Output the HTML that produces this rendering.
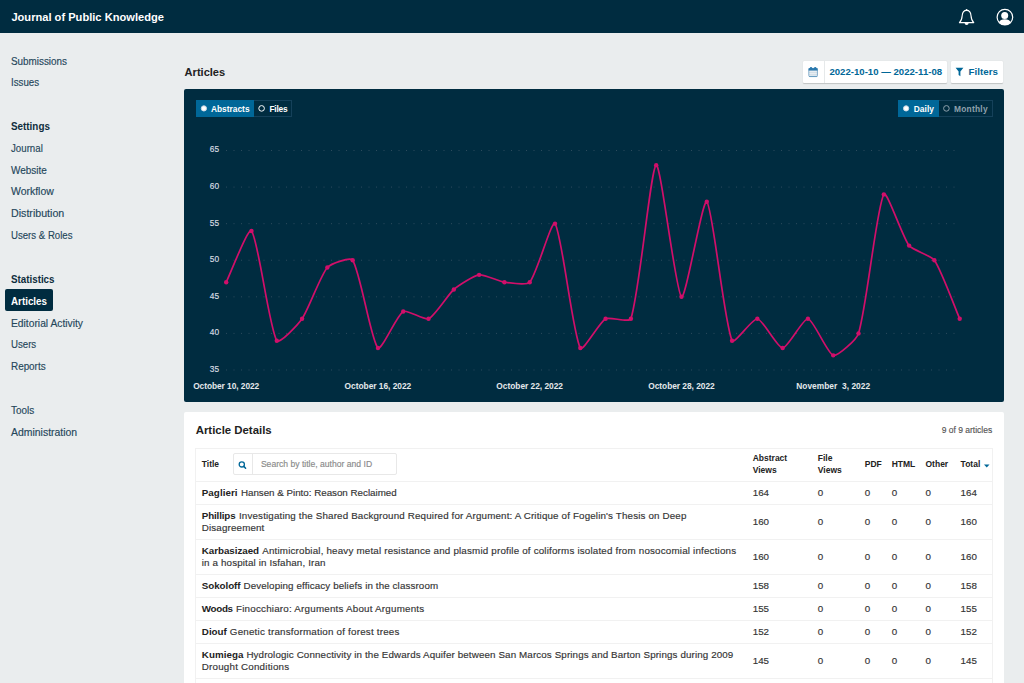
<!DOCTYPE html>
<html><head><meta charset="utf-8"><style>
html,body{margin:0;padding:0;}
body{width:1024px;height:683px;overflow:hidden;position:relative;background:#eaedee;font-family:"Liberation Sans",sans-serif;color:#222;}
.t{position:absolute;white-space:nowrap;line-height:1;-webkit-text-stroke:0.15px currentColor;}
.t[style*="font-weight:700"]{-webkit-text-stroke:0;}
.b{position:absolute;}
</style></head><body>
<div class="b" style="left:0px;top:0px;width:1024px;height:33px;background:#002c40;"></div>
<div class="t" style="left:11.40px;top:12.00px;font-size:11.1px;font-weight:700;color:#fff;letter-spacing:0.010px;">Journal of Public Knowledge</div>
<svg class="b" style="left:956px;top:7px" width="22" height="21" viewBox="0 0 22 21">
<path d="M10.6 3.4 C7.4 3.4 6.4 5.8 6.2 8.6 C6 12 5.2 14 3.4 15.6 L17.8 15.6 C16 14 15.2 12 15 8.6 C14.8 5.8 13.8 3.4 10.6 3.4 Z" fill="none" stroke="#fff" stroke-width="1.1" stroke-linejoin="round"/>
<path d="M8.6 16 A2 2 0 0 0 12.6 16 Z" fill="#fff"/>
<circle cx="10.6" cy="2.9" r="0.9" fill="#fff"/>
</svg>
<svg class="b" style="left:995px;top:7px" width="20" height="20" viewBox="0 0 20 20">
<circle cx="9.9" cy="10.2" r="7.8" fill="none" stroke="#fff" stroke-width="1.2"/>
<circle cx="9.7" cy="8.4" r="3.5" fill="#fff"/>
<path d="M4 15.4 C4.8 13.3 6.8 12.3 9.8 12.3 C12.8 12.3 14.8 13.3 15.7 15.4 C14.3 17.1 12.2 18 9.8 18 C7.4 18 5.4 17.1 4 15.4 Z" fill="#fff"/>
</svg>
<div class="t" style="left:11.00px;top:55.56px;font-size:10.8px;color:#24465a;transform:scaleX(0.9146);transform-origin:0 0;">Submissions</div>
<div class="t" style="left:11.00px;top:77.46px;font-size:10.8px;color:#24465a;transform:scaleX(0.9002);transform-origin:0 0;">Issues</div>
<div class="t" style="left:11.00px;top:121.16px;font-size:10.8px;font-weight:700;color:#0f2d3d;transform:scaleX(0.9130);transform-origin:0 0;">Settings</div>
<div class="t" style="left:11.00px;top:142.86px;font-size:10.8px;color:#24465a;transform:scaleX(0.8977);transform-origin:0 0;">Journal</div>
<div class="t" style="left:11.00px;top:164.66px;font-size:10.8px;color:#24465a;transform:scaleX(0.9248);transform-origin:0 0;">Website</div>
<div class="t" style="left:11.00px;top:186.46px;font-size:10.8px;color:#24465a;transform:scaleX(0.9681);transform-origin:0 0;">Workflow</div>
<div class="t" style="left:11.00px;top:208.26px;font-size:10.8px;color:#24465a;transform:scaleX(0.9866);transform-origin:0 0;">Distribution</div>
<div class="t" style="left:11.00px;top:230.16px;font-size:10.8px;color:#24465a;transform:scaleX(0.8910);transform-origin:0 0;">Users &amp; Roles</div>
<div class="t" style="left:11.00px;top:273.86px;font-size:10.8px;font-weight:700;color:#0f2d3d;transform:scaleX(0.9058);transform-origin:0 0;">Statistics</div>
<div class="b" style="left:5.2px;top:289.4px;width:47.599999999999994px;height:21.80000000000001px;background:#002c40;border-radius:2px;"></div>
<div class="t" style="left:11.00px;top:295.76px;font-size:10.8px;font-weight:700;color:#fff;transform:scaleX(0.9086);transform-origin:0 0;">Articles</div>
<div class="t" style="left:11.00px;top:317.66px;font-size:10.8px;color:#24465a;transform:scaleX(0.9520);transform-origin:0 0;">Editorial Activity</div>
<div class="t" style="left:11.00px;top:339.46px;font-size:10.8px;color:#24465a;transform:scaleX(0.8935);transform-origin:0 0;">Users</div>
<div class="t" style="left:11.00px;top:361.36px;font-size:10.8px;color:#24465a;transform:scaleX(0.9149);transform-origin:0 0;">Reports</div>
<div class="t" style="left:11.00px;top:405.06px;font-size:10.8px;color:#24465a;transform:scaleX(0.9202);transform-origin:0 0;">Tools</div>
<div class="t" style="left:11.00px;top:426.86px;font-size:10.8px;color:#24465a;transform:scaleX(0.9674);transform-origin:0 0;">Administration</div>
<div class="t" style="left:184.60px;top:66.93px;font-size:11.07px;font-weight:700;letter-spacing:-0.001px;">Articles</div>
<div class="b" style="left:802.8px;top:61px;width:143.9000000000001px;height:21.700000000000003px;background:#fff;border-radius:1px;box-shadow:0 0.5px 1px rgba(0,0,0,.18);"></div>
<div class="b" style="left:824px;top:61px;width:1px;height:21.700000000000003px;background:#e6e9ea;"></div>
<svg class="b" style="left:807px;top:66px" width="12" height="12" viewBox="0 0 12 12">
<rect x="1.8" y="2.4" width="8.6" height="8.2" rx="1" fill="#d3dee6" stroke="#6a9cc0" stroke-width="0.8"/>
<rect x="1.6" y="2.2" width="9" height="2.3" fill="#2a78ad"/>
<circle cx="4" cy="2.3" r="1.2" fill="#2a78ad"/><circle cx="8.2" cy="2.3" r="1.2" fill="#2a78ad"/>
<path d="M2.4 5.6H9.8M2.4 7.6H9.8M2.4 9.4H9.8" stroke="#f4f7f9" stroke-width=".7"/>
<path d="M2 10.4H10.2" stroke="#4a8bb8" stroke-width=".6"/>
</svg>
<div class="t" style="left:829.40px;top:66.77px;font-size:9.6px;font-weight:700;color:#006798;letter-spacing:0.008px;">2022-10-10 — 2022-11-08</div>
<div class="b" style="left:951px;top:61px;width:51.799999999999955px;height:21.700000000000003px;background:#fff;border-radius:1px;box-shadow:0 0.5px 1px rgba(0,0,0,.18);"></div>
<svg class="b" style="left:955px;top:67px" width="9" height="10" viewBox="0 0 9 10">
<path d="M0.6 0.8 H8.4 L5.4 4.4 V9.2 L3.6 8 V4.4 Z" fill="#006798"/>
</svg>
<div class="t" style="left:968.60px;top:66.74px;font-size:9.76px;font-weight:700;color:#006798;letter-spacing:0.001px;">Filters</div>
<div class="b" style="left:184px;top:89px;width:819.5px;height:312.5px;background:#002c40;border-radius:2px;"></div>
<div class="b" style="left:196px;top:99.7px;width:96px;height:17.5px;border:1px solid #15415a;box-sizing:border-box;"></div>
<div class="b" style="left:196px;top:99.7px;width:58.400000000000006px;height:17.5px;background:#006798;"></div>
<svg class="b" style="left:199px;top:103px" width="10" height="10"><circle cx="4.9" cy="5.4" r="2.6" fill="#fff" stroke="#c8d8e4" stroke-width="1"/></svg>
<div class="t" style="left:210.90px;top:104.79px;font-size:8.4px;font-weight:700;color:#fff;letter-spacing:0.006px;">Abstracts</div>
<svg class="b" style="left:256px;top:103px" width="10" height="10"><circle cx="5.6" cy="5.4" r="2.8" fill="none" stroke="#fff" stroke-width="1"/></svg>
<div class="t" style="left:269.40px;top:104.79px;font-size:8.4px;font-weight:700;color:#fff;letter-spacing:-0.228px;">Files</div>
<div class="b" style="left:898.4px;top:99.8px;width:94.20000000000005px;height:17.200000000000003px;border:1px solid #15415a;box-sizing:border-box;"></div>
<div class="b" style="left:898.4px;top:99.8px;width:40.700000000000045px;height:17.200000000000003px;background:#006798;"></div>
<svg class="b" style="left:901px;top:103px" width="10" height="10"><circle cx="5.1" cy="5.4" r="2.6" fill="#fff" stroke="#c8d8e4" stroke-width="1"/></svg>
<div class="t" style="left:913.80px;top:104.79px;font-size:8.4px;font-weight:700;color:#fff;letter-spacing:0.025px;">Daily</div>
<svg class="b" style="left:941px;top:103px" width="10" height="10"><circle cx="5.4" cy="5.4" r="2.8" fill="none" stroke="#8fa1ac" stroke-width="1"/></svg>
<div class="t" style="left:953.90px;top:104.79px;font-size:8.4px;font-weight:700;color:#8fa1ac;letter-spacing:0.272px;">Monthly</div>
<svg class="b" style="left:0;top:0" width="1024" height="683">
<line x1="226" y1="150.50" x2="956" y2="150.50" stroke="#2c4b5d" stroke-width="1" stroke-dasharray="1 6.5"/>
<line x1="226" y1="187.08" x2="956" y2="187.08" stroke="#2c4b5d" stroke-width="1" stroke-dasharray="1 6.5"/>
<line x1="226" y1="223.66" x2="956" y2="223.66" stroke="#2c4b5d" stroke-width="1" stroke-dasharray="1 6.5"/>
<line x1="226" y1="260.24" x2="956" y2="260.24" stroke="#2c4b5d" stroke-width="1" stroke-dasharray="1 6.5"/>
<line x1="226" y1="296.82" x2="956" y2="296.82" stroke="#2c4b5d" stroke-width="1" stroke-dasharray="1 6.5"/>
<line x1="226" y1="333.40" x2="956" y2="333.40" stroke="#2c4b5d" stroke-width="1" stroke-dasharray="1 6.5"/>
<line x1="226" y1="369.98" x2="956" y2="369.98" stroke="#2c4b5d" stroke-width="1" stroke-dasharray="1 6.5"/>
<path d="M226.20 282.19 C231.26 271.95 248.09 227.04 251.49 230.98 C258.21 238.74 268.99 327.18 276.79 340.72 C279.11 344.74 298.34 324.18 302.08 318.77 C308.46 309.54 320.45 275.57 327.37 267.56 C330.56 263.86 350.40 256.64 352.67 260.24 C360.52 272.73 371.15 341.14 377.96 348.03 C381.27 351.39 396.90 315.13 403.25 311.45 C407.01 309.28 424.45 320.55 428.54 318.77 C434.56 316.16 448.07 294.51 453.84 289.50 C458.19 285.73 473.81 275.64 479.13 274.87 C483.93 274.18 499.26 281.44 504.42 282.19 C509.38 282.90 526.84 285.51 529.72 282.19 C536.96 273.81 551.63 219.26 555.01 223.66 C561.74 232.43 572.55 333.45 580.30 348.03 C582.67 352.48 599.48 322.31 605.60 318.77 C609.60 316.45 629.48 323.06 630.89 318.77 C639.59 292.33 650.75 167.49 656.18 165.13 C660.86 163.10 675.64 292.60 681.48 296.82 C685.76 299.92 702.62 198.11 706.77 201.71 C712.73 206.89 723.88 321.79 732.06 340.72 C734.00 345.20 752.66 318.09 757.36 318.77 C762.78 319.55 777.59 348.03 782.65 348.03 C787.71 348.03 803.24 318.09 807.94 318.77 C813.35 319.55 827.46 353.68 833.23 355.35 C837.58 356.61 856.59 339.57 858.53 333.40 C866.71 307.38 876.62 206.90 883.82 194.40 C886.73 189.34 902.42 236.90 909.11 245.61 C912.54 250.06 931.23 255.64 934.41 260.24 C941.34 270.27 954.64 307.06 959.70 318.77" fill="none" stroke="#d10f6a" stroke-width="1.7"/>
<circle cx="226.20" cy="282.19" r="2.2" fill="#d10f6a"/>
<circle cx="251.49" cy="230.98" r="2.2" fill="#d10f6a"/>
<circle cx="276.79" cy="340.72" r="2.2" fill="#d10f6a"/>
<circle cx="302.08" cy="318.77" r="2.2" fill="#d10f6a"/>
<circle cx="327.37" cy="267.56" r="2.2" fill="#d10f6a"/>
<circle cx="352.67" cy="260.24" r="2.2" fill="#d10f6a"/>
<circle cx="377.96" cy="348.03" r="2.2" fill="#d10f6a"/>
<circle cx="403.25" cy="311.45" r="2.2" fill="#d10f6a"/>
<circle cx="428.54" cy="318.77" r="2.2" fill="#d10f6a"/>
<circle cx="453.84" cy="289.50" r="2.2" fill="#d10f6a"/>
<circle cx="479.13" cy="274.87" r="2.2" fill="#d10f6a"/>
<circle cx="504.42" cy="282.19" r="2.2" fill="#d10f6a"/>
<circle cx="529.72" cy="282.19" r="2.2" fill="#d10f6a"/>
<circle cx="555.01" cy="223.66" r="2.2" fill="#d10f6a"/>
<circle cx="580.30" cy="348.03" r="2.2" fill="#d10f6a"/>
<circle cx="605.60" cy="318.77" r="2.2" fill="#d10f6a"/>
<circle cx="630.89" cy="318.77" r="2.2" fill="#d10f6a"/>
<circle cx="656.18" cy="165.13" r="2.2" fill="#d10f6a"/>
<circle cx="681.48" cy="296.82" r="2.2" fill="#d10f6a"/>
<circle cx="706.77" cy="201.71" r="2.2" fill="#d10f6a"/>
<circle cx="732.06" cy="340.72" r="2.2" fill="#d10f6a"/>
<circle cx="757.36" cy="318.77" r="2.2" fill="#d10f6a"/>
<circle cx="782.65" cy="348.03" r="2.2" fill="#d10f6a"/>
<circle cx="807.94" cy="318.77" r="2.2" fill="#d10f6a"/>
<circle cx="833.23" cy="355.35" r="2.2" fill="#d10f6a"/>
<circle cx="858.53" cy="333.40" r="2.2" fill="#d10f6a"/>
<circle cx="883.82" cy="194.40" r="2.2" fill="#d10f6a"/>
<circle cx="909.11" cy="245.61" r="2.2" fill="#d10f6a"/>
<circle cx="934.41" cy="260.24" r="2.2" fill="#d10f6a"/>
<circle cx="959.70" cy="318.77" r="2.2" fill="#d10f6a"/>
</svg>
<div class="t" style="left:209.87px;top:145.47px;font-size:8.3px;color:#d9dee2;">65</div>
<div class="t" style="left:209.87px;top:182.05px;font-size:8.3px;color:#d9dee2;">60</div>
<div class="t" style="left:209.87px;top:218.63px;font-size:8.3px;color:#d9dee2;">55</div>
<div class="t" style="left:209.87px;top:255.21px;font-size:8.3px;color:#d9dee2;">50</div>
<div class="t" style="left:209.87px;top:291.79px;font-size:8.3px;color:#d9dee2;">45</div>
<div class="t" style="left:209.87px;top:328.37px;font-size:8.3px;color:#d9dee2;">40</div>
<div class="t" style="left:209.87px;top:364.95px;font-size:8.3px;color:#d9dee2;">35</div>
<div class="t" style="left:193.15px;top:382.23px;font-size:8.35px;font-weight:700;color:#e4e8eb;letter-spacing:-0.046px;white-space:pre;">October 10, 2022</div>
<div class="t" style="left:344.61px;top:382.23px;font-size:8.35px;font-weight:700;color:#e4e8eb;letter-spacing:-0.009px;white-space:pre;">October 16, 2022</div>
<div class="t" style="left:496.37px;top:382.23px;font-size:8.35px;font-weight:700;color:#e4e8eb;letter-spacing:-0.009px;white-space:pre;">October 22, 2022</div>
<div class="t" style="left:648.28px;top:382.23px;font-size:8.35px;font-weight:700;color:#e4e8eb;letter-spacing:-0.027px;white-space:pre;">October 28, 2022</div>
<div class="t" style="left:796.23px;top:382.23px;font-size:8.35px;font-weight:700;color:#e4e8eb;letter-spacing:0.039px;white-space:pre;">November  3, 2022</div>
<div class="b" style="left:184px;top:412px;width:819.5px;height:288px;background:#fff;border-radius:2px;"></div>
<div class="t" style="left:195.70px;top:424.85px;font-size:11.4px;font-weight:700;letter-spacing:-0.002px;">Article Details</div>
<div class="t" style="left:941.70px;top:426.10px;font-size:8.5px;color:#555;letter-spacing:-0.003px;">9 of 9 articles</div>
<div class="b" style="left:195px;top:447.5px;width:798px;height:252.5px;border:1px solid #f1f1f1;border-bottom:none;box-sizing:border-box;"></div>
<div class="t" style="left:201.80px;top:460.05px;font-size:8.45px;font-weight:700;letter-spacing:-0.004px;">Title</div>
<div class="b" style="left:233px;top:453.3px;width:164px;height:22.099999999999966px;border:1px solid #e8e8e8;border-radius:2px;box-sizing:border-box;"></div>
<div class="b" style="left:252.2px;top:453.3px;width:1.0px;height:22.099999999999966px;background:#e8e8e8;"></div>
<svg class="b" style="left:237px;top:459px" width="11" height="11" viewBox="0 0 11 11">
<circle cx="4.8" cy="5.4" r="2.6" fill="none" stroke="#006798" stroke-width="1.3"/>
<path d="M6.8 7.4 L8.6 9.2" stroke="#006798" stroke-width="1.5" stroke-linecap="round"/>
</svg>
<div class="t" style="left:260.90px;top:460.32px;font-size:8.6px;color:#8a8a8a;letter-spacing:-0.003px;">Search by title, author and ID</div>
<div class="t" style="left:752.70px;top:454.40px;font-size:8.5px;font-weight:700;">Abstract</div>
<div class="t" style="left:752.70px;top:465.80px;font-size:8.5px;font-weight:700;">Views</div>
<div class="t" style="left:817.80px;top:454.40px;font-size:8.5px;font-weight:700;">File</div>
<div class="t" style="left:817.80px;top:465.80px;font-size:8.5px;font-weight:700;">Views</div>
<div class="t" style="left:864.80px;top:460.00px;font-size:8.5px;font-weight:700;">PDF</div>
<div class="t" style="left:891.70px;top:460.00px;font-size:8.5px;font-weight:700;">HTML</div>
<div class="t" style="left:925.50px;top:460.00px;font-size:8.5px;font-weight:700;">Other</div>
<div class="t" style="left:960.60px;top:460.00px;font-size:8.5px;font-weight:700;">Total</div>
<svg class="b" style="left:983px;top:463px" width="8" height="6"><path d="M1 1.5 H6.5 L3.75 4.5 Z" fill="#006798"/></svg>
<div class="b" style="left:195.5px;top:481px;width:797.0px;height:1px;background:#f1f1f1;"></div>
<div class="b" style="left:195.5px;top:504px;width:797.0px;height:1px;background:#f1f1f1;"></div>
<div class="b" style="left:195.5px;top:539px;width:797.0px;height:1px;background:#f1f1f1;"></div>
<div class="b" style="left:195.5px;top:574px;width:797.0px;height:1px;background:#f1f1f1;"></div>
<div class="b" style="left:195.5px;top:597px;width:797.0px;height:1px;background:#f1f1f1;"></div>
<div class="b" style="left:195.5px;top:620px;width:797.0px;height:1px;background:#f1f1f1;"></div>
<div class="b" style="left:195.5px;top:643px;width:797.0px;height:1px;background:#f1f1f1;"></div>
<div class="b" style="left:195.5px;top:678px;width:797.0px;height:1px;background:#f1f1f1;"></div>
<div class="t" style="left:201.80px;top:488.00px;font-size:9.8px;font-weight:700;letter-spacing:0.037px;">Paglieri</div>
<div class="t" style="left:240.90px;top:488.00px;font-size:9.8px;color:#333;letter-spacing:-0.017px;white-space:pre;">Hansen &amp; Pinto: Reason Reclaimed</div>
<div class="t" style="left:752.70px;top:488.00px;font-size:9.8px;color:#333;">164</div>
<div class="t" style="left:817.80px;top:488.00px;font-size:9.8px;color:#333;">0</div>
<div class="t" style="left:864.80px;top:488.00px;font-size:9.8px;color:#333;">0</div>
<div class="t" style="left:891.70px;top:488.00px;font-size:9.8px;color:#333;">0</div>
<div class="t" style="left:925.50px;top:488.00px;font-size:9.8px;color:#333;">0</div>
<div class="t" style="left:960.60px;top:488.00px;font-size:9.8px;color:#333;">164</div>
<div class="t" style="left:201.80px;top:511.30px;font-size:9.8px;font-weight:700;letter-spacing:-0.144px;">Phillips</div>
<div class="t" style="left:239.00px;top:511.30px;font-size:9.8px;color:#333;letter-spacing:0.150px;white-space:pre;">Investigating the Shared Background Required for Argument: A Critique of Fogelin's Thesis on Deep</div>
<div class="t" style="left:201.80px;top:522.90px;font-size:9.8px;color:#333;letter-spacing:0.141px;white-space:pre;">Disagreement</div>
<div class="t" style="left:752.70px;top:516.80px;font-size:9.8px;color:#333;">160</div>
<div class="t" style="left:817.80px;top:516.80px;font-size:9.8px;color:#333;">0</div>
<div class="t" style="left:864.80px;top:516.80px;font-size:9.8px;color:#333;">0</div>
<div class="t" style="left:891.70px;top:516.80px;font-size:9.8px;color:#333;">0</div>
<div class="t" style="left:925.50px;top:516.80px;font-size:9.8px;color:#333;">0</div>
<div class="t" style="left:960.60px;top:516.80px;font-size:9.8px;color:#333;">160</div>
<div class="t" style="left:201.80px;top:546.30px;font-size:9.8px;font-weight:700;letter-spacing:-0.049px;">Karbasizaed</div>
<div class="t" style="left:262.20px;top:546.30px;font-size:9.8px;color:#333;letter-spacing:0.183px;white-space:pre;">Antimicrobial, heavy metal resistance and plasmid profile of coliforms isolated from nosocomial infections</div>
<div class="t" style="left:201.80px;top:557.90px;font-size:9.8px;color:#333;letter-spacing:0.131px;white-space:pre;">in a hospital in Isfahan, Iran</div>
<div class="t" style="left:752.70px;top:551.80px;font-size:9.8px;color:#333;">160</div>
<div class="t" style="left:817.80px;top:551.80px;font-size:9.8px;color:#333;">0</div>
<div class="t" style="left:864.80px;top:551.80px;font-size:9.8px;color:#333;">0</div>
<div class="t" style="left:891.70px;top:551.80px;font-size:9.8px;color:#333;">0</div>
<div class="t" style="left:925.50px;top:551.80px;font-size:9.8px;color:#333;">0</div>
<div class="t" style="left:960.60px;top:551.80px;font-size:9.8px;color:#333;">160</div>
<div class="t" style="left:201.80px;top:581.00px;font-size:9.8px;font-weight:700;letter-spacing:-0.062px;">Sokoloff</div>
<div class="t" style="left:243.50px;top:581.00px;font-size:9.8px;color:#333;letter-spacing:0.111px;white-space:pre;">Developing efficacy beliefs in the classroom</div>
<div class="t" style="left:752.70px;top:581.00px;font-size:9.8px;color:#333;">158</div>
<div class="t" style="left:817.80px;top:581.00px;font-size:9.8px;color:#333;">0</div>
<div class="t" style="left:864.80px;top:581.00px;font-size:9.8px;color:#333;">0</div>
<div class="t" style="left:891.70px;top:581.00px;font-size:9.8px;color:#333;">0</div>
<div class="t" style="left:925.50px;top:581.00px;font-size:9.8px;color:#333;">0</div>
<div class="t" style="left:960.60px;top:581.00px;font-size:9.8px;color:#333;">158</div>
<div class="t" style="left:201.80px;top:604.00px;font-size:9.8px;font-weight:700;letter-spacing:-0.316px;">Woods</div>
<div class="t" style="left:236.00px;top:604.00px;font-size:9.8px;color:#333;letter-spacing:0.215px;white-space:pre;">Finocchiaro: Arguments About Arguments</div>
<div class="t" style="left:752.70px;top:604.00px;font-size:9.8px;color:#333;">155</div>
<div class="t" style="left:817.80px;top:604.00px;font-size:9.8px;color:#333;">0</div>
<div class="t" style="left:864.80px;top:604.00px;font-size:9.8px;color:#333;">0</div>
<div class="t" style="left:891.70px;top:604.00px;font-size:9.8px;color:#333;">0</div>
<div class="t" style="left:925.50px;top:604.00px;font-size:9.8px;color:#333;">0</div>
<div class="t" style="left:960.60px;top:604.00px;font-size:9.8px;color:#333;">155</div>
<div class="t" style="left:201.80px;top:627.00px;font-size:9.8px;font-weight:700;letter-spacing:0.013px;">Diouf</div>
<div class="t" style="left:229.80px;top:627.00px;font-size:9.8px;color:#333;letter-spacing:0.214px;white-space:pre;">Genetic transformation of forest trees</div>
<div class="t" style="left:752.70px;top:627.00px;font-size:9.8px;color:#333;">152</div>
<div class="t" style="left:817.80px;top:627.00px;font-size:9.8px;color:#333;">0</div>
<div class="t" style="left:864.80px;top:627.00px;font-size:9.8px;color:#333;">0</div>
<div class="t" style="left:891.70px;top:627.00px;font-size:9.8px;color:#333;">0</div>
<div class="t" style="left:925.50px;top:627.00px;font-size:9.8px;color:#333;">0</div>
<div class="t" style="left:960.60px;top:627.00px;font-size:9.8px;color:#333;">152</div>
<div class="t" style="left:201.80px;top:650.30px;font-size:9.8px;font-weight:700;letter-spacing:0.045px;">Kumiega</div>
<div class="t" style="left:246.40px;top:650.30px;font-size:9.8px;color:#333;letter-spacing:0.117px;white-space:pre;">Hydrologic Connectivity in the Edwards Aquifer between San Marcos Springs and Barton Springs during 2009</div>
<div class="t" style="left:201.80px;top:661.90px;font-size:9.8px;color:#333;letter-spacing:0.206px;white-space:pre;">Drought Conditions</div>
<div class="t" style="left:752.70px;top:655.80px;font-size:9.8px;color:#333;">145</div>
<div class="t" style="left:817.80px;top:655.80px;font-size:9.8px;color:#333;">0</div>
<div class="t" style="left:864.80px;top:655.80px;font-size:9.8px;color:#333;">0</div>
<div class="t" style="left:891.70px;top:655.80px;font-size:9.8px;color:#333;">0</div>
<div class="t" style="left:925.50px;top:655.80px;font-size:9.8px;color:#333;">0</div>
<div class="t" style="left:960.60px;top:655.80px;font-size:9.8px;color:#333;">145</div>
</body></html>
